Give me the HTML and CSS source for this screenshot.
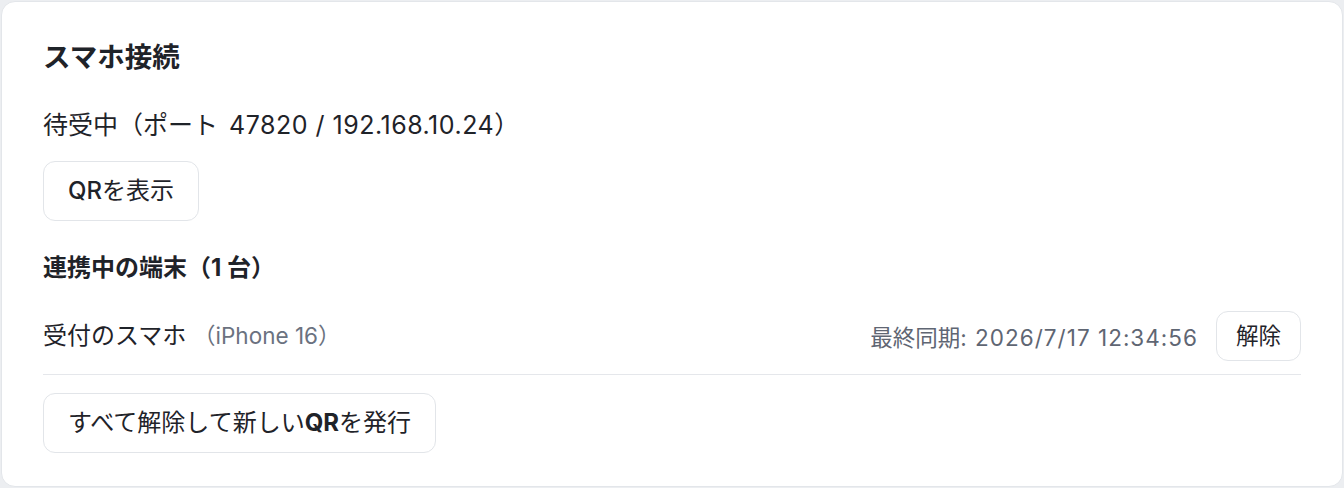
FILE: index.html
```html
<!DOCTYPE html>
<html lang="ja">
<head>
    <meta charset="UTF-8">
    <meta name="viewport" content="width=device-width, initial-scale=1.0">
    <title>スマホ接続</title>
    <link rel="stylesheet" href="styles.css">
</head>
<body>

<div class="card">
    <h1>スマホ接続</h1>

    <p class="status">待受中（ポート <span class="num">47820 / 192.168.10.24</span>）</p>

    <div class="actions">
        <button class="btn btn-lg" type="button"><span class="latin">QR</span>を表示</button>
    </div>

    <h2>連携中の端末（1 台）</h2>

    <!-- Paired devices -->
    <ul class="devices">
        <li class="device">
            <div class="device-name">受付のスマホ <span class="device-model">（iPhone 16）</span></div>
            <div class="device-meta">
                <span class="last-sync">最終同期<span class="num">: 2026/7/17 12:34:56</span></span>
                <button class="btn btn-sm" type="button">解除</button>
            </div>
        </li>
    </ul>

    <div class="actions">
        <button class="btn btn-lg" type="button">すべて解除して新しい<span class="latin strong">QR</span>を発行</button>
    </div>
</div>

</body>
</html>
```

FILE: styles.css
```css
/* Basic Reset */
* {
    margin: 0;
    padding: 0;
    box-sizing: border-box;
}
html, body {
    height: 100%;
}
body {
    font-family: "Inter", "Noto Sans CJK JP", sans-serif;
    background-color: #eceef1;
    color: #1f2329;
    padding: 1px;
}
.card {
    height: 100%;
    background-color: #fff;
    border: 1px solid #e3e6ea;
    border-radius: 14px;
    padding: 39px 41px 33px;
    display: flex;
    flex-direction: column;
}
h1 {
    font-size: 27.5px;
    font-weight: 700;
    line-height: 32px;
}
.status {
    font-size: 25px;
    line-height: 36px;
    margin-top: 34px;
}
.num {
    letter-spacing: 0.045em;
}
.status .num {
    letter-spacing: 0.02em;
    margin-left: 4px;
}
.actions {
    display: flex;
    margin-top: 18px;
}
h2 {
    font-size: 24px;
    font-weight: 700;
    line-height: 32px;
    margin-top: 31px;
}
.devices {
    list-style: none;
    margin-top: 27px;
}
.device {
    display: flex;
    align-items: center;
    justify-content: space-between;
    padding-bottom: 13px;
    border-bottom: 1px solid #e5e7eb;
}
.device-name {
    font-size: 24px;
    line-height: 36px;
}
.device-model {
    color: #6b7280;
    font-size: 22.5px;
}
.device-meta {
    display: flex;
    align-items: center;
    gap: 18px;
}
.last-sync {
    color: #5f6673;
    font-size: 22.5px;
}
.btn {
    font-family: inherit;
    color: #1f2329;
    background-color: #fff;
    border: 1.5px solid #e2e5e9;
    border-radius: 12px;
    cursor: pointer;
}
.btn:hover {
    background-color: #f7f8fa;
}
.btn-lg {
    font-size: 24px;
    line-height: 36px;
    padding: 11px 24px;
}
.btn-sm {
    font-size: 22.5px;
    line-height: 34px;
    padding: 7px 19px;
}
.latin {
    font-weight: 500;
}
.latin.strong {
    font-weight: 700;
}
```
